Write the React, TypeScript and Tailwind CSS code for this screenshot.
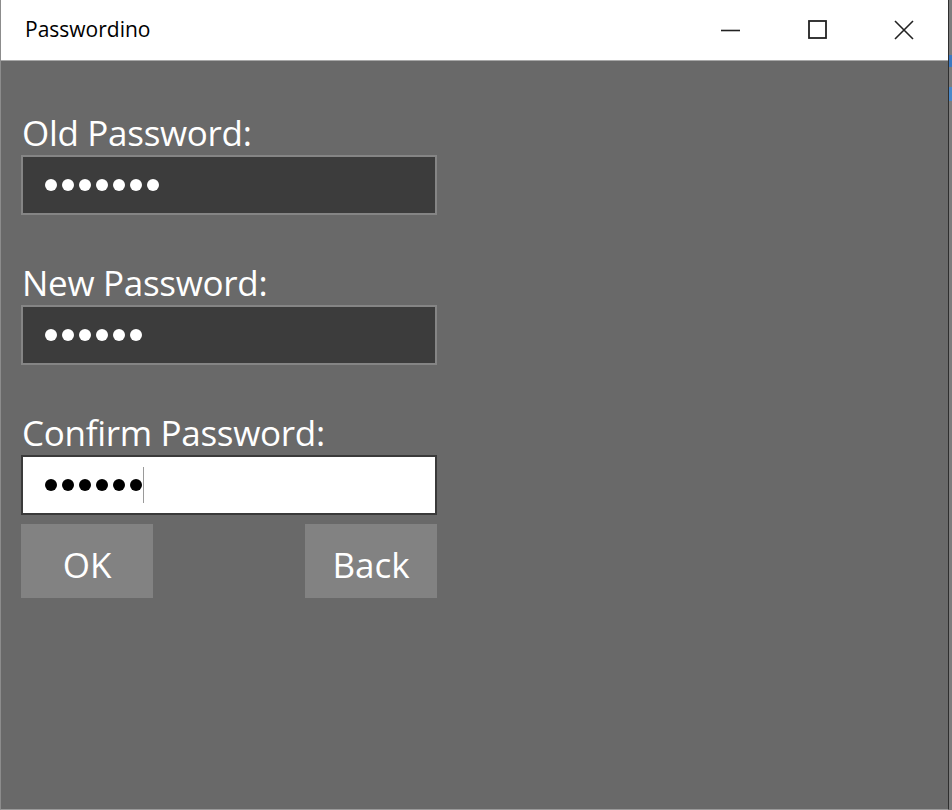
import React from "react";

const font = { fontFamily: '"Segoe UI", "Open Sans", "Noto Sans", sans-serif' };

function Dots({ n, color }: { n: number; color: string }) {
  return (
    <div className="flex gap-[5px] items-center">
      {Array.from({ length: n }).map((_, i) => (
        <div key={i} className={`w-[12px] h-[12px] rounded-full ${color}`} />
      ))}
    </div>
  );
}

function Field({ label, n, focused }: { label: string; n: number; focused?: boolean }) {
  return (
    <div className="flex flex-col">
      <div className="text-white text-[35px] leading-[40px] pl-[1px] tracking-[-0.3px]">{label}</div>
      <div
        className={
          focused
            ? "mt-[2px] w-[416px] h-[60px] border-2 border-[#3a3a3a] bg-white flex items-center pl-[22px]"
            : "mt-[2px] w-[416px] h-[60px] border-2 border-[#858585] bg-[#3c3c3c] flex items-center pl-[22px]"
        }
      >
        <Dots n={n} color={focused ? "bg-black" : "bg-white"} />
        {focused && <div className="ml-[1px] w-[1px] h-[36px] bg-[#9a9a9a]" />}
      </div>
    </div>
  );
}

export default function App() {
  return (
    <div className="w-[952px] h-[810px] flex bg-[#8a8a8a]" style={font}>
      <div className="w-[949px] h-[810px] flex flex-col border-l border-[#8c8c8c] border-r border-r-[#2e2e2e] border-b border-b-[#9a9a9a] bg-[#696969]">
        <div className="h-[61px] bg-white border-b border-[#a8a8a8] flex items-center">
          <div className="pl-[24px] text-[21px] text-black flex-1 pb-[1px]">Passwordino</div>
          <div className="flex items-center h-full">
            <div className="w-[87px] h-full flex items-center justify-center">
              <svg width="20" height="20" viewBox="0 0 20 20"><path d="M0 10.5h19" stroke="#222" strokeWidth="1.6" /></svg>
            </div>
            <div className="w-[87px] h-full flex items-center justify-center">
              <svg width="20" height="20" viewBox="0 0 20 20"><rect x="1" y="1" width="17" height="17" fill="none" stroke="#222" strokeWidth="1.8" /></svg>
            </div>
            <div className="w-[87px] h-full flex items-center justify-center pr-[2px]">
              <svg width="20" height="20" viewBox="0 0 20 20"><path d="M1 1L19 19M19 1L1 19" stroke="#222" strokeWidth="1.6" /></svg>
            </div>
          </div>
        </div>
        <div className="flex flex-col pl-[20px] pt-[52px]">
          <div className="flex flex-col gap-[48px]">
            <Field label="Old Password:" n={7} />
            <Field label="New Password:" n={6} />
          </div>
          <div className="mt-[48px]">
            <Field label="Confirm Password:" n={6} focused />
          </div>
          <div className="w-[416px] flex justify-between mt-[9px]">
            <div className="w-[132px] h-[74px] bg-[#828282] text-white text-[35px] flex items-center justify-center pt-[8px]">OK</div>
            <div className="w-[132px] h-[74px] bg-[#828282] text-white text-[35px] flex items-center justify-center pt-[8px]">Back</div>
          </div>
        </div>
      </div>
      <div className="w-[3px] h-[810px] flex flex-col bg-[#7d7d7d]">
        <div className="h-[55px]" />
        <div className="h-[12px] bg-[#3b78c0]" />
        <div className="h-[20px]" />
        <div className="h-[14px] bg-[#4a88c8]" />
      </div>
    </div>
  );
}
